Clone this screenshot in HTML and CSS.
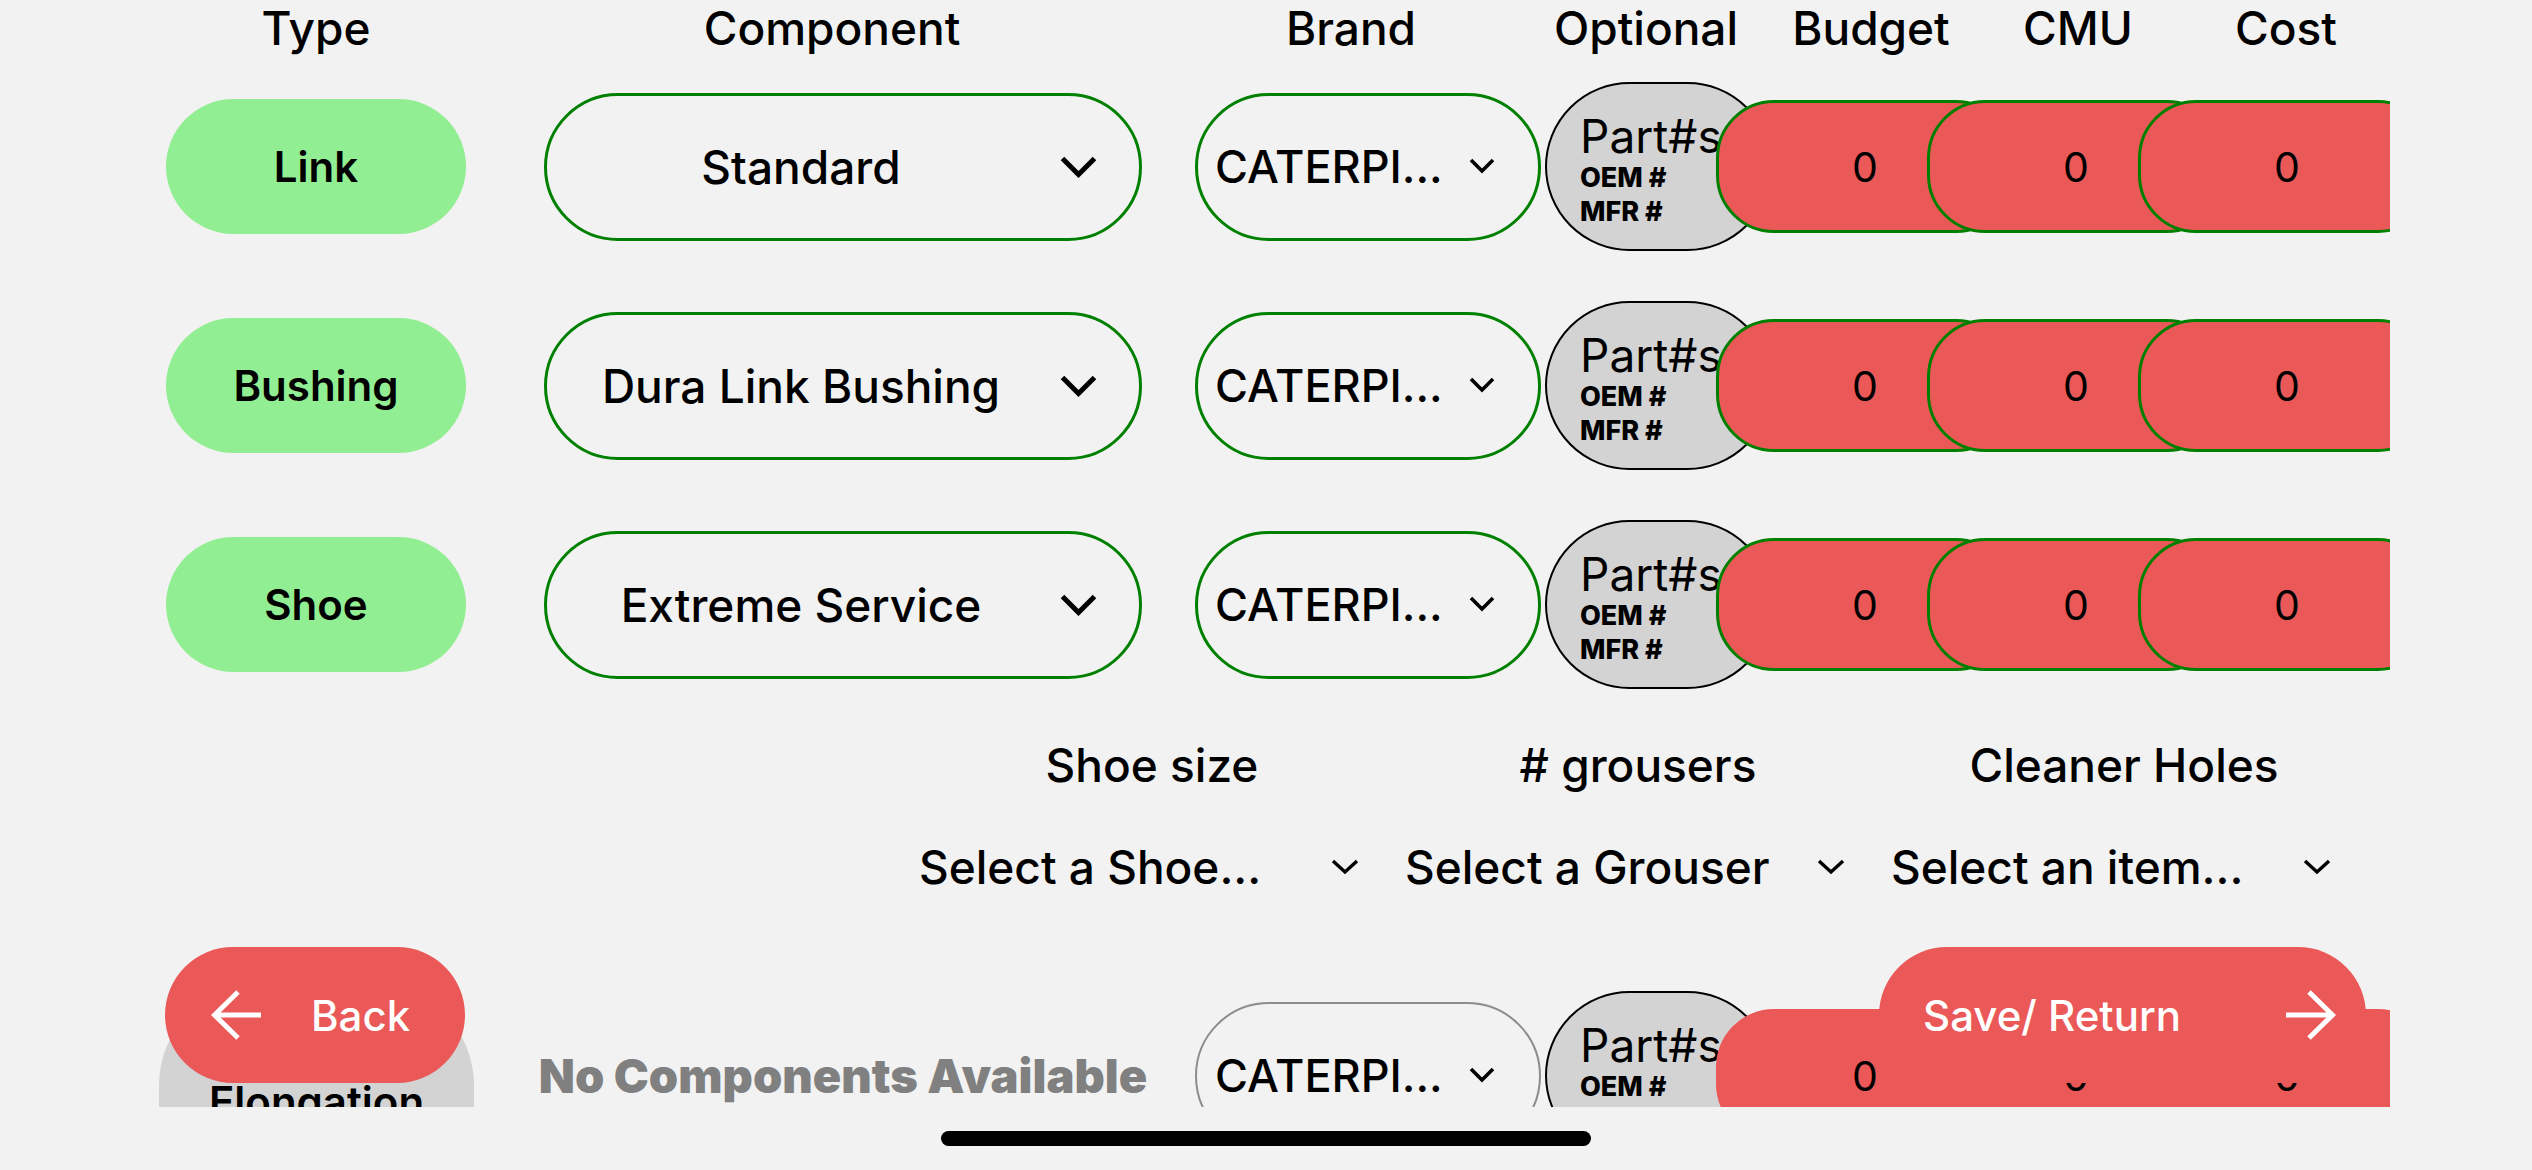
FILE: index.html
```html
<!DOCTYPE html>
<html lang="en">
<head>
<meta charset="utf-8">
<title>Undercarriage Components</title>
<link rel="stylesheet" href="styles.css">
</head>
<body>
<div class="screen">
  <div class="scroll">
    <div class="table">
      <div class="head">
        <div class="h h-type">Type</div>
        <div class="h h-comp">Component</div>
        <div class="h h-brand">Brand</div>
        <div class="h h-opt">Optional</div>
        <div class="h h-budget">Budget</div>
        <div class="h h-cmu">CMU</div>
        <div class="h h-cost">Cost</div>
      </div>

      <div class="row">
        <div class="type">Link</div>
        <div class="select comp"><span class="val">Standard</span><svg class="chev-lg" viewBox="0 0 37 22" width="37" height="22"><path d="M2.5 2.5 L18.5 18.5 L34.5 2.5" fill="none" stroke="#000" stroke-width="5"/></svg></div>
        <div class="select brand"><span>CATERPI...</span><svg class="chev-sm" viewBox="0 0 26 17" width="26" height="17"><path d="M2 2 L13 13 L24 2" fill="none" stroke="#000" stroke-width="3.6"/></svg></div>
        <div class="parts"><span class="p-title">Part#s</span><span class="p-sub">OEM #</span><span class="p-sub">MFR #</span></div>
        <div class="num first">0</div>
        <div class="num">0</div>
        <div class="num">0</div>
      </div>

      <div class="row">
        <div class="type">Bushing</div>
        <div class="select comp"><span class="val">Dura Link Bushing</span><svg class="chev-lg" viewBox="0 0 37 22" width="37" height="22"><path d="M2.5 2.5 L18.5 18.5 L34.5 2.5" fill="none" stroke="#000" stroke-width="5"/></svg></div>
        <div class="select brand"><span>CATERPI...</span><svg class="chev-sm" viewBox="0 0 26 17" width="26" height="17"><path d="M2 2 L13 13 L24 2" fill="none" stroke="#000" stroke-width="3.6"/></svg></div>
        <div class="parts"><span class="p-title">Part#s</span><span class="p-sub">OEM #</span><span class="p-sub">MFR #</span></div>
        <div class="num first">0</div>
        <div class="num">0</div>
        <div class="num">0</div>
      </div>

      <div class="row">
        <div class="type">Shoe</div>
        <div class="select comp"><span class="val">Extreme Service</span><svg class="chev-lg" viewBox="0 0 37 22" width="37" height="22"><path d="M2.5 2.5 L18.5 18.5 L34.5 2.5" fill="none" stroke="#000" stroke-width="5"/></svg></div>
        <div class="select brand"><span>CATERPI...</span><svg class="chev-sm" viewBox="0 0 26 17" width="26" height="17"><path d="M2 2 L13 13 L24 2" fill="none" stroke="#000" stroke-width="3.6"/></svg></div>
        <div class="parts"><span class="p-title">Part#s</span><span class="p-sub">OEM #</span><span class="p-sub">MFR #</span></div>
        <div class="num first">0</div>
        <div class="num">0</div>
        <div class="num">0</div>
      </div>

      <div class="extras">
        <div class="extra">
          <div class="extra-label">Shoe size</div>
          <div class="picker"><span>Select a Shoe...</span><svg class="chev-pk" viewBox="0 0 28 16" width="28" height="16"><path d="M2 2 L14 13 L26 2" fill="none" stroke="#000" stroke-width="3.4"/></svg></div>
        </div>
        <div class="extra">
          <div class="extra-label"># grousers</div>
          <div class="picker"><span>Select a Grouser</span><svg class="chev-pk" viewBox="0 0 28 16" width="28" height="16"><path d="M2 2 L14 13 L26 2" fill="none" stroke="#000" stroke-width="3.4"/></svg></div>
        </div>
        <div class="extra">
          <div class="extra-label">Cleaner Holes</div>
          <div class="picker"><span>Select an item...</span><svg class="chev-pk" viewBox="0 0 28 16" width="28" height="16"><path d="M2 2 L14 13 L26 2" fill="none" stroke="#000" stroke-width="3.4"/></svg></div>
        </div>
      </div>

      <div class="row row-last">
        <div class="type type-gray">Elongation</div>
        <div class="empty">No Components Available</div>
        <div class="select brand muted"><span>CATERPI...</span><svg class="chev-sm" viewBox="0 0 26 17" width="26" height="17"><path d="M2 2 L13 13 L24 2" fill="none" stroke="#000" stroke-width="3.6"/></svg></div>
        <div class="parts"><span class="p-title">Part#s</span><span class="p-sub">OEM #</span><span class="p-sub">MFR #</span></div>
        <div class="num first flat">0</div>
        <div class="num flat">0</div>
        <div class="num flat">0</div>
      </div>
    </div>
  </div>

  <div class="actions">
    <div class="btn btn-back">
      <svg class="arrow" viewBox="0 0 50 50" width="50" height="50"><path d="M3 25 H50 M27 2 L3.5 25 L27 48" fill="none" stroke="#fff" stroke-width="5"/></svg>
      <span>Back</span>
    </div>
    <div class="btn btn-save">
      <span>Save/ Return</span>
      <svg class="arrow" viewBox="0 0 50 50" width="50" height="50"><path d="M47 25 H0 M23 2 L46.5 25 L23 48" fill="none" stroke="#fff" stroke-width="5"/></svg>
    </div>
  </div>

  <div class="home"><div class="home-bar"></div></div>
</div>
</body>
</html>
```

FILE: styles.css
```css
* {
  box-sizing: border-box;
}

html,
body {
  margin: 0;
  padding: 0;
}

body {
  background: #f2f2f2;
  color: #000;
  font-family: Inter, "Noto Sans", "Liberation Sans", sans-serif;
  width: 2532px;
  height: 1170px;
  overflow: hidden;
}

.screen {
  position: relative;
  width: 2532px;
  height: 1170px;
}

.scroll {
  height: 1107px;
  overflow: hidden;
}

.table {
  width: 2390px;
  padding-left: 166px;
  overflow: hidden;
}

/* header */
.head {
  display: flex;
  height: 56px;
  margin-bottom: 26px;
  font-size: 46px;
  font-weight: 500;
  line-height: 56px;
}

.h {
  flex: none;
  text-align: center;
  white-space: nowrap;
}

.h-type { width: 300px; }
.h-comp { width: 732px; }
.h-brand { width: 306px; }
.h-opt { width: 284px; }
.h-budget { width: 166px; }
.h-cmu { width: 248px; }
.h-cost { width: 168px; }

/* rows */
.row {
  display: flex;
  align-items: center;
  height: 169px;
}

.row + .row {
  margin-top: 50px;
}

.type {
  flex: none;
  width: 300px;
  height: 135px;
  border-radius: 68px;
  background: #92ee92;
  display: flex;
  align-items: center;
  justify-content: center;
  font-size: 42px;
  font-weight: 600;
  line-height: 50px;
}

.select {
  flex: none;
  height: 148px;
  border: 3px solid #008000;
  border-radius: 74px;
  display: flex;
  align-items: center;
  white-space: nowrap;
}

.comp {
  width: 598px;
  margin-left: 78px;
  padding: 0 42px 0 20px;
  font-size: 46px;
  font-weight: 500;
}

.comp .val {
  flex: 1;
  text-align: center;
  margin-right: 25px;
}

.brand {
  width: 346px;
  margin-left: 53px;
  padding: 0 43px 0 17px;
  justify-content: space-between;
  font-size: 45px;
  font-weight: 500;
}

.brand.muted {
  border: 2px solid #8c8c8c;
  padding: 0 44px 0 18px;
}

.chev-lg,
.chev-sm,
.chev-pk {
  flex: none;
  display: block;
}

.parts {
  flex: none;
  width: 227px;
  height: 169px;
  margin-left: 4px;
  border: 2px solid #000;
  border-radius: 85px;
  background: #d3d3d3;
  padding: 6px 0 0 33px;
  display: flex;
  flex-direction: column;
  justify-content: center;
  white-space: nowrap;
}

.p-title {
  font-size: 46px;
  line-height: 50px;
  font-weight: 400;
}

.p-sub {
  font-size: 27px;
  font-weight: 800;
  line-height: 34px;
}

.num {
  flex: none;
  width: 298px;
  height: 133px;
  margin-left: -87px;
  border: 3px solid #008000;
  border-radius: 58px;
  background: #eb5858;
  display: flex;
  align-items: center;
  justify-content: center;
  font-size: 41px;
  font-weight: 400;
}

.num.first {
  margin-left: -56px;
}

.num.flat {
  border-color: transparent;
}

/* shoe options */
.extras {
  display: grid;
  grid-template-columns: repeat(3, 486px);
  margin: 48px 0 0 743px;
}

.extra {
  display: flex;
  flex-direction: column;
}

.extra-label {
  text-align: center;
  font-size: 46px;
  font-weight: 500;
  line-height: 56px;
  white-space: nowrap;
}

.picker {
  margin-top: 46px;
  height: 56px;
  display: flex;
  align-items: center;
  justify-content: space-between;
  padding: 0 36px 0 10px;
  font-size: 46px;
  font-weight: 500;
  line-height: 56px;
  white-space: nowrap;
}

/* last row */
.row.row-last {
  margin-top: 96px;
}

.type.type-gray {
  width: 315px;
  height: 250px;
  margin-left: -7px;
  margin-top: -6px;
  align-self: flex-start;
  align-items: flex-start;
  padding-top: 92px;
  border-radius: 100px;
  background: #d3d3d3;
}

.empty {
  flex: none;
  width: 598px;
  margin-left: 70px;
  display: flex;
  justify-content: center;
  font-size: 47px;
  font-weight: 900;
  color: #808080;
  white-space: nowrap;
}

/* floating actions */
.actions {
  position: absolute;
  left: 165px;
  right: 166px;
  top: 947px;
  display: flex;
  justify-content: space-between;
}

.btn {
  height: 136px;
  border-radius: 68px;
  background: #eb5858;
  color: #fff;
  display: flex;
  align-items: center;
  font-size: 42px;
  font-weight: 500;
  white-space: nowrap;
}

.btn-back {
  width: 300px;
  padding-left: 46px;
  gap: 50px;
}

.btn-save {
  width: 487px;
  padding: 0 30px 0 44px;
  justify-content: space-between;
}

.arrow {
  flex: none;
  display: block;
}

/* home indicator */
.home {
  display: flex;
  justify-content: center;
  padding-top: 24px;
}

.home-bar {
  width: 650px;
  height: 15px;
  border-radius: 8px;
  background: #000;
}
```
